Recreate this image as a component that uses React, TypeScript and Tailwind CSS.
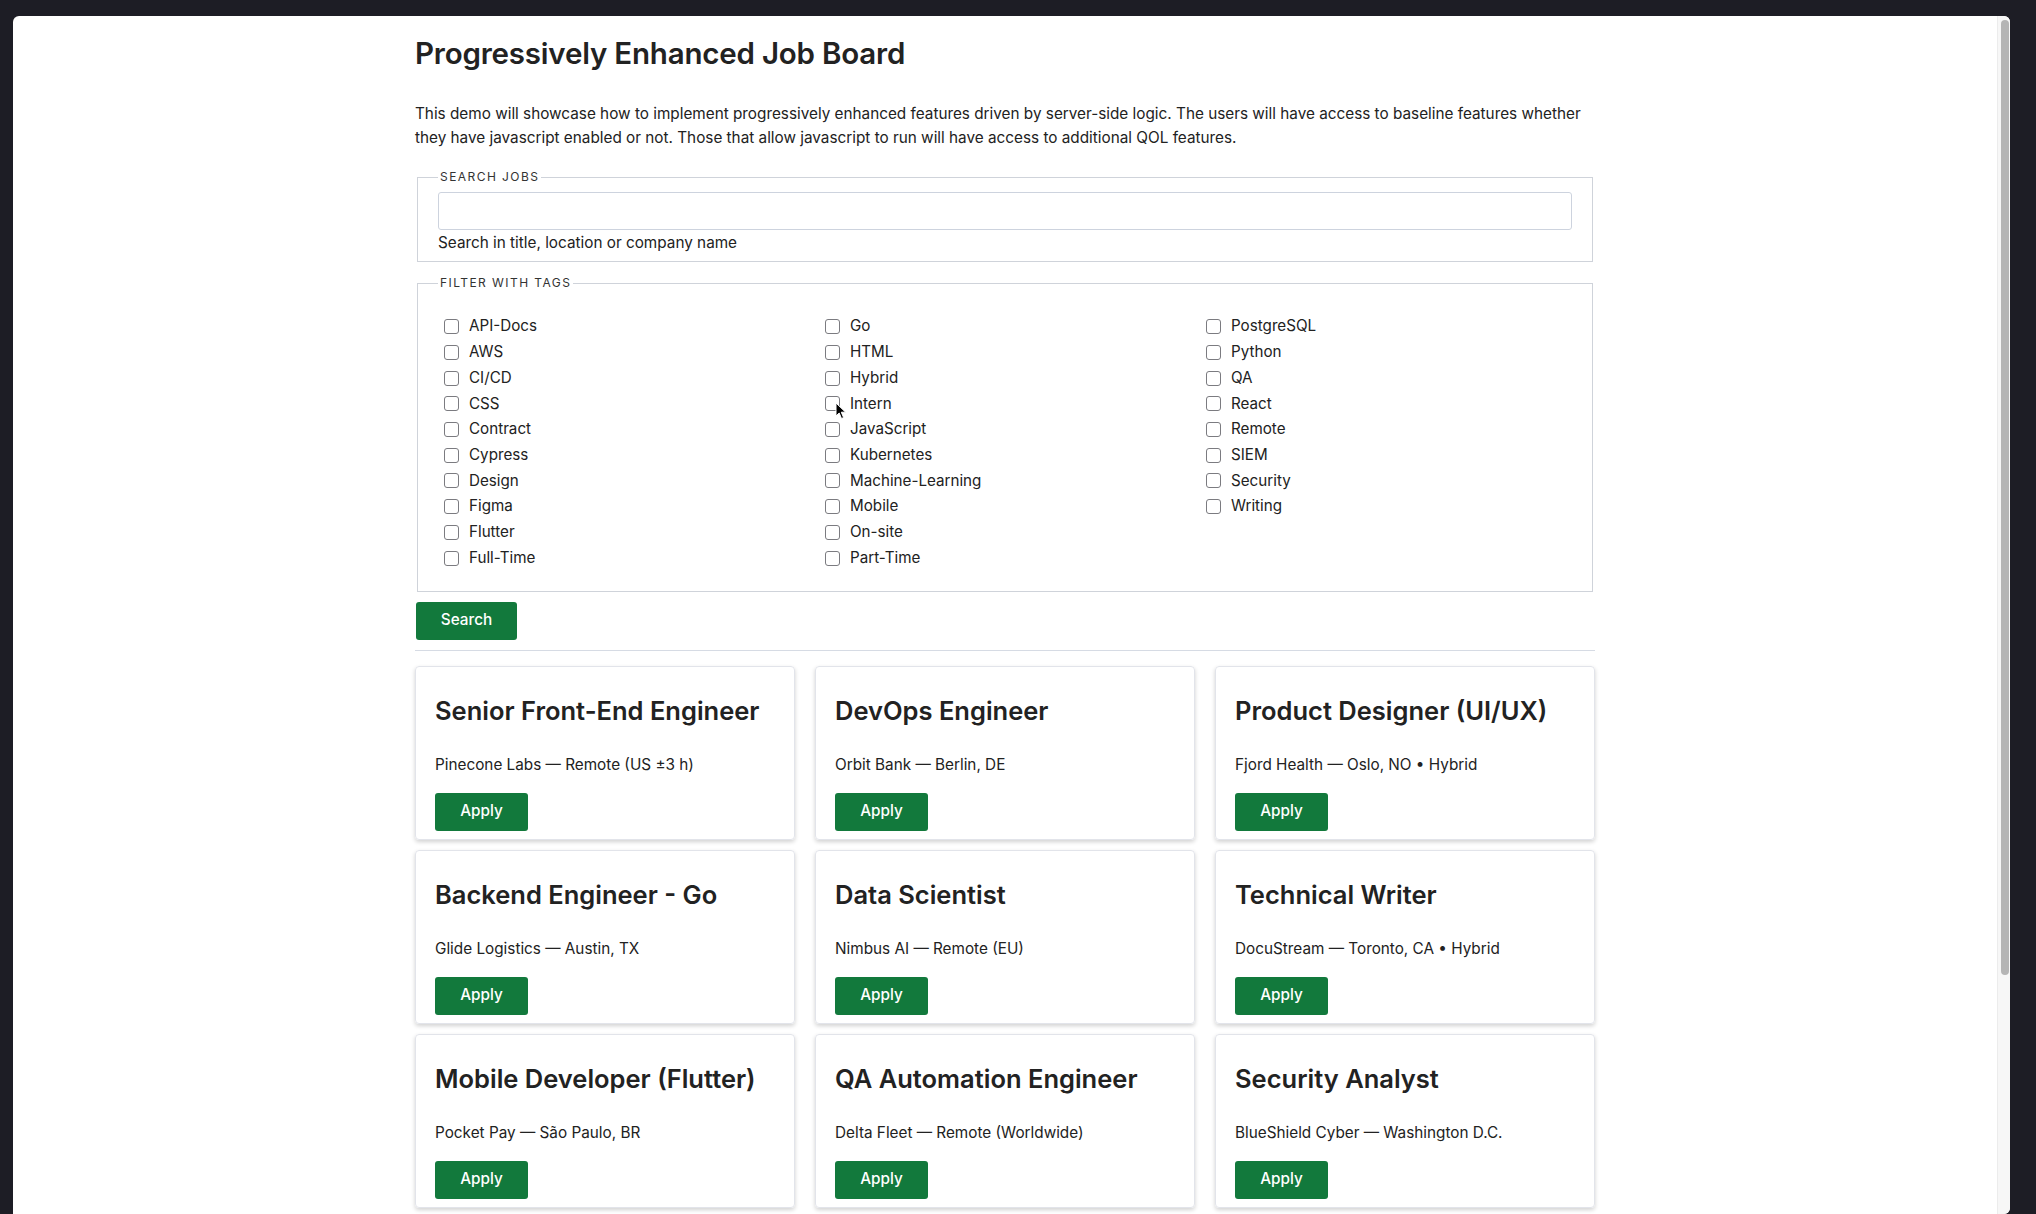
import { useState } from 'react';

const TAG_COLUMNS: string[][] = [
  ['API-Docs', 'AWS', 'CI/CD', 'CSS', 'Contract', 'Cypress', 'Design', 'Figma', 'Flutter', 'Full-Time'],
  ['Go', 'HTML', 'Hybrid', 'Intern', 'JavaScript', 'Kubernetes', 'Machine-Learning', 'Mobile', 'On-site', 'Part-Time'],
  ['PostgreSQL', 'Python', 'QA', 'React', 'Remote', 'SIEM', 'Security', 'Writing'],
];

const JOBS = [
  { title: 'Senior Front-End Engineer', meta: 'Pinecone Labs — Remote (US ±3 h)' },
  { title: 'DevOps Engineer', meta: 'Orbit Bank — Berlin, DE' },
  { title: 'Product Designer (UI/UX)', meta: 'Fjord Health — Oslo, NO • Hybrid' },
  { title: 'Backend Engineer - Go', meta: 'Glide Logistics — Austin, TX' },
  { title: 'Data Scientist', meta: 'Nimbus AI — Remote (EU)' },
  { title: 'Technical Writer', meta: 'DocuStream — Toronto, CA • Hybrid' },
  { title: 'Mobile Developer (Flutter)', meta: 'Pocket Pay — São Paulo, BR' },
  { title: 'QA Automation Engineer', meta: 'Delta Fleet — Remote (Worldwide)' },
  { title: 'Security Analyst', meta: 'BlueShield Cyber — Washington D.C.' },
];

export default function App() {
  const [query, setQuery] = useState('');
  const [tags, setTags] = useState<string[]>([]);

  const toggle = (tag: string) =>
    setTags((t) => (t.includes(tag) ? t.filter((x) => x !== tag) : [...t, tag]));

  return (
    <div className="w-[2036px] h-[1214px] bg-[#1d1d25] pt-[16px] pl-[13px] overflow-hidden">
      {/* Browser window */}
      <div className="relative w-[1997px] h-[1198px] bg-white rounded-t-[6px] rounded-br-[6px] overflow-hidden font-['Inter','Liberation_Sans',sans-serif] text-[#222]">
        <div className="w-[1984px]">
          <div className="mx-auto w-[1180px] pt-[19px]">
            <h1 className="text-[29.5px] leading-[36px] font-semibold tracking-[-0.2px]">
              Progressively Enhanced Job Board
            </h1>

            <p className="mt-[31px] text-[15.3px] leading-[24px]">
              This demo will showcase how to implement progressively enhanced features driven by server-side logic. The users will have access to baseline features whether they have javascript enabled or not. Those that allow javascript to run will have access to additional QOL features.
            </p>

            <form onSubmit={(e) => e.preventDefault()} className="mt-[19px]">
              {/* Search */}
              <fieldset className="mx-[2px] border border-[#cfd3da] px-[20px] pt-[7px] pb-[6px]">
                <legend className="px-[2px] text-[12px] leading-[16px] tracking-[0.12em] uppercase text-[#333]">
                  Search jobs
                </legend>
                <input
                  type="text"
                  value={query}
                  onChange={(e) => setQuery(e.target.value)}
                  className="block w-full h-[38px] border border-[#cdd3de] rounded-[3px] px-3 text-[15px] outline-none"
                />
                <p className="mt-[1px] text-[15.3px] leading-[24px]">Search in title, location or company name</p>
              </fieldset>

              {/* Tags */}
              <fieldset className="mx-[2px] mt-[13px] border border-[#cfd3da] pl-[26px] pr-[20px] pt-[23px] pb-[20px]">
                <legend className="ml-[-6px] px-[2px] text-[12px] leading-[16px] tracking-[0.12em] uppercase text-[#333]">
                  Filter with tags
                </legend>
                <div className="grid grid-cols-[381px_381px_1fr]">
                  {TAG_COLUMNS.map((col, i) => (
                    <div key={i} className="flex flex-col">
                      {col.map((tag) => (
                        <label key={tag} className="flex items-center h-[25.7px] gap-[10px] text-[15.2px]">
                          <input
                            type="checkbox"
                            checked={tags.includes(tag)}
                            onChange={() => toggle(tag)}
                            className="appearance-none w-[15px] h-[15px] border-[1.5px] border-[#7b7b80] rounded-[3px] bg-white checked:bg-[#137a3c]"
                          />
                          {tag}
                        </label>
                      ))}
                    </div>
                  ))}
                </div>
              </fieldset>

              <button
                type="submit"
                className="mt-[10px] ml-[1px] w-[101px] h-[38px] rounded-[3px] bg-[#12793c] text-white text-[15.3px] font-medium"
              >
                Search
              </button>
            </form>

            <hr className="mt-[10px] border-0 h-px bg-[#d6dbe4]" />

            <div className="mt-[15px] grid grid-cols-3 gap-x-[20px] gap-y-[10px]">
              {JOBS.map((job) => (
                <div
                  key={job.title}
                  className="h-[174px] rounded-[4px] border border-[#e2e4ea] shadow-[0_2px_4px_rgba(0,0,0,0.18)] pt-[28px] px-[19px]"
                >
                  <h2 className="text-[25.5px] leading-[32px] font-semibold">{job.title}</h2>
                  <p className="mt-[26px] text-[15.3px] leading-[24px]">{job.meta}</p>
                  <button className="mt-[16px] w-[93px] h-[38px] rounded-[3px] bg-[#12793c] text-white text-[15.3px] font-medium">
                    Apply
                  </button>
                </div>
              ))}
            </div>
          </div>
        </div>

        {/* Overlay scrollbar */}
        <div className="absolute top-0 right-0 bottom-0 w-[13px] bg-[#f7f7f7] border-l border-[#ececec]">
          <div className="absolute left-[3px] top-[4px] w-[8px] h-[955px] rounded-full bg-[#b5b5b5]" />
        </div>

        {/* Mouse cursor */}
        <svg className="absolute left-[822px] top-[386px]" width="12" height="18" viewBox="0 0 12 18">
          <path d="M1 1 L1 14 L4.2 11 L6.5 16.5 L8.6 15.6 L6.3 10.2 L10.6 10.2 Z" fill="#000" stroke="#fff" strokeWidth="1" strokeLinejoin="round" />
        </svg>
      </div>
    </div>
  );
}
